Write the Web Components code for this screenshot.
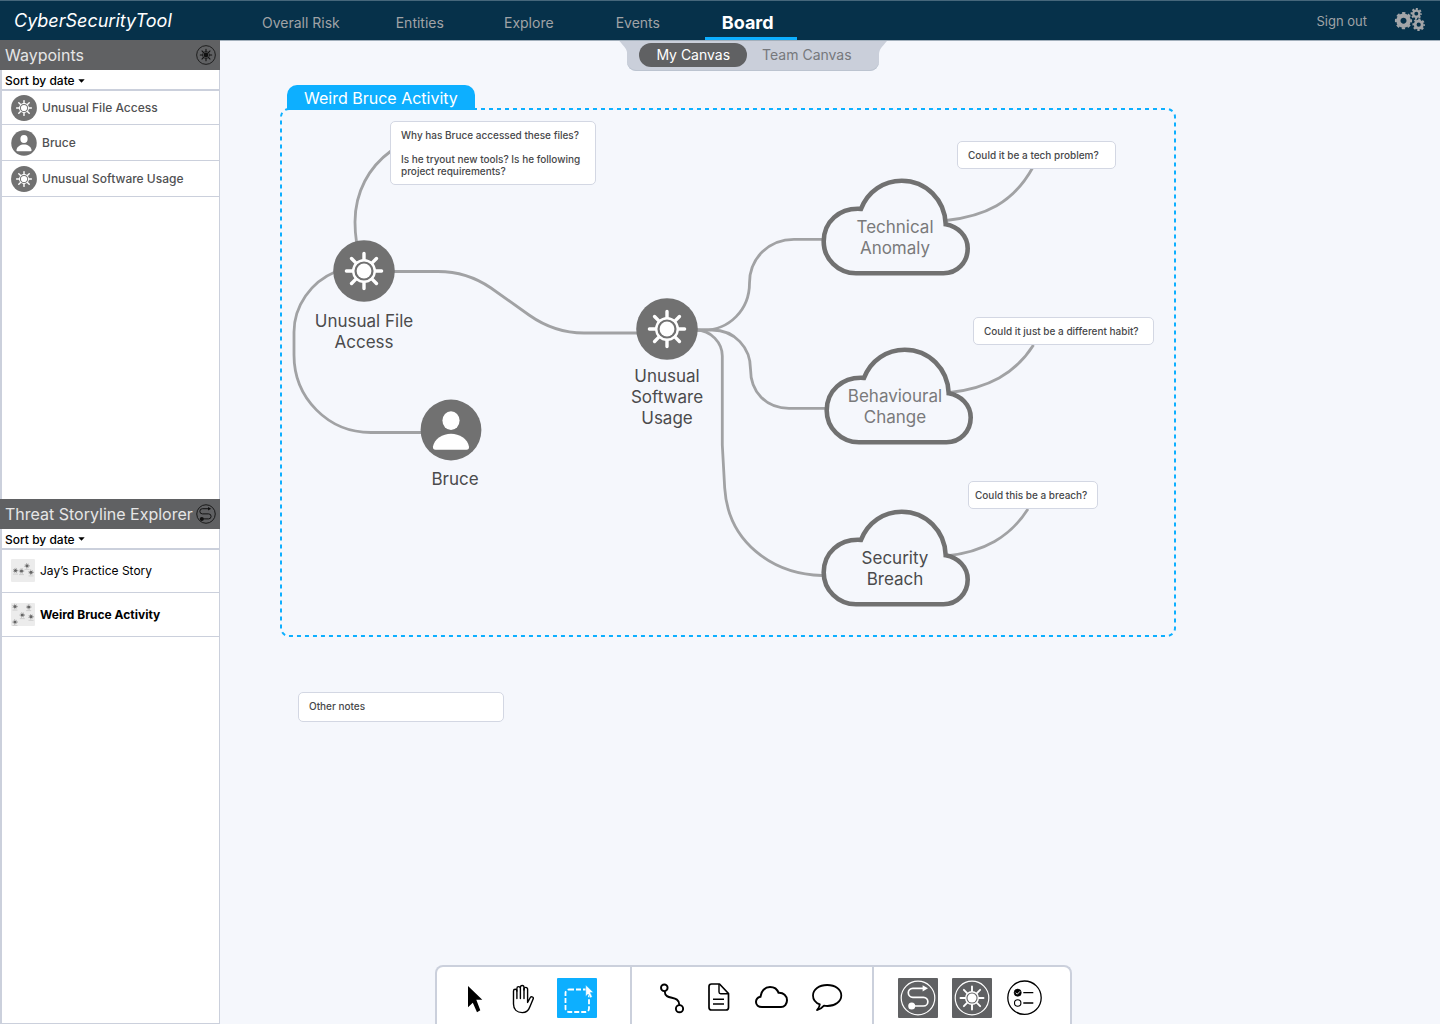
<!DOCTYPE html>
<html lang="en">
<head>
<meta charset="utf-8">
<title>CyberSecurityTool – Board</title>
<style>
  html, body { margin: 0; }
  body {
    font-family: Inter, "Liberation Sans", sans-serif;
    font-size: 14px;
    --line: #cbd0dc;
    --panel: #606163;
    --accent: #0dafff;
    --canvas: #f5f7fc;
  }
</style>
</head>
<body>
<cyber-app>
  <app-header slot="header"></app-header>
  <side-panel slot="side" heading="Waypoints" icon="sun-outline">
    <waypoint-item icon="sun">Unusual File Access</waypoint-item>
    <waypoint-item icon="person">Bruce</waypoint-item>
    <waypoint-item icon="sun">Unusual Software Usage</waypoint-item>
  </side-panel>
  <side-panel slot="side" heading="Threat Storyline Explorer" icon="route-outline">
    <story-item icon="thumb-a">Jay’s Practice Story</story-item>
    <story-item icon="thumb-b" current>Weird Bruce Activity</story-item>
  </side-panel>
  <canvas-tabs slot="tabs"></canvas-tabs>
  <story-board slot="board">
    <board-node icon="sun" style="left:113px;top:200px"></board-node>
    <board-label style="left:84px;top:271px">Unusual File<br>Access</board-label>
    <board-node icon="person" style="left:200px;top:359px"></board-node>
    <board-label style="left:175px;top:429px">Bruce</board-label>
    <board-node icon="sun" style="left:416px;top:258px"></board-node>
    <board-label style="left:387px;top:326px">Unusual<br>Software<br>Usage</board-label>
    <board-cloud style="left:600px;top:138px"></board-cloud>
    <board-label muted style="left:615px;top:177px">Technical<br>Anomaly</board-label>
    <board-cloud style="left:603px;top:307px"></board-cloud>
    <board-label muted style="left:615px;top:346px">Behavioural<br>Change</board-label>
    <board-cloud style="left:600px;top:469px"></board-cloud>
    <board-label style="left:615px;top:508px">Security<br>Breach</board-label>
    <board-note style="left:170px;top:81px;width:206px">Why has Bruce accessed these files?<br><br>Is he tryout new tools? Is he following project requirements?</board-note>
    <board-note style="left:737px;top:101px;width:159px">Could it be a tech problem?</board-note>
    <board-note style="left:753px;top:277px;width:181px">Could it just be a different habit?</board-note>
    <board-note snug style="left:748px;top:441px;width:130px">Could this be a breach?</board-note>
    <board-note style="left:78px;top:652px;width:206px;height:30px">Other notes</board-note>
  </story-board>
  <tool-bar slot="tools"></tool-bar>
</cyber-app>

<script>
const rays = (inner, outer) => [0, 45, 90, 135, 180, 225, 270, 315].map(a => {
  const c = Math.cos(a * Math.PI / 180), s = Math.sin(a * Math.PI / 180);
  return `M${(c * inner).toFixed(2)} ${(s * inner).toFixed(2)}L${(c * outer).toFixed(2)} ${(s * outer).toFixed(2)}`;
}).join('');

const sunShape = color => `
  <path d="${rays(11.5, 17.6)}" fill="none" stroke="${color}" stroke-width="3.4" stroke-linecap="round"/>
  <circle r="10.8" fill="none" stroke="${color}" stroke-width="2.4"/>
  <circle r="7.4" fill="${color}"/>`;

const routeShape = color => `
  <path d="M14 28H25.5a4.35 4.35 0 0 0 0-8.7H14.8a4.5 4.5 0 0 1 0-9H26" fill="none" stroke="${color}" stroke-width="1.7"/>
  <circle cx="13.7" cy="28" r="3.5" fill="${color}"/>
  <path d="M24.6 7.2L30 10.3l-5.4 3.2z" fill="${color}"/>`;

const gear = (x, y, r, hole, teeth) => {
  const body = r - 1.4, ring = r - 1, step = 2 * Math.PI * ring / teeth;
  return `<g transform="translate(${x} ${y})" fill="none" stroke="#a3a5a8">
    <circle r="${(body + hole) / 2}" stroke-width="${body - hole}"/>
    <circle r="${ring}" stroke-width="2" stroke-dasharray="${step * .55} ${step * .45}" stroke-dashoffset="${step * .275}"/></g>`;
};

const star = (x, y) => `<circle cx="${x}" cy="${y}" r="1.6" fill="#666"/><circle cx="${x}" cy="${y}" r="2.2" fill="none" stroke="#777" stroke-width=".8" stroke-dasharray=".7 1"/><path d="M${x - 2.5} ${y + 3.6}h5" stroke="#bbb" stroke-width=".6"/>`;

const ICONS = {
  'sun': ['-31 -31 62 62', `<circle r="30.8" fill="#717171"/>${sunShape('#fff')}`],
  'person': ['-31 -31 62 62', `<circle r="30.4" fill="#717171"/><ellipse cy="-9.4" rx="8.6" ry="9.4" fill="#fff"/><path d="M-18 16.5C-16.5 8.5-8.5 3.7 0 3.7S16.5 8.5 18 16.5Q18.3 19.7 15.5 19.7H-15.5Q-18.3 19.7-18 16.5Z" fill="#fff"/>`],
  'sun-outline': ['-31 -31 62 62', `<circle r="29" fill="none" stroke="#111" stroke-width="2.6"/>${sunShape('#111')}`],
  'route-outline': ['0 0 40 40', `<circle cx="20" cy="20" r="18.5" fill="none" stroke="#111" stroke-width="1.8"/><g transform="translate(20 20) scale(1.15) translate(-21 -19.5)">${routeShape('#111')}</g>`],
  'gears': ['1394 5 32 30', gear(1403.5, 19.7, 8.6, 3, 8) + gear(1416.3, 12.7, 5.7, 1.9, 8) + gear(1418.7, 23.7, 6.3, 2.1, 8)],
  'thumb-a': ['0 0 24 23', `<rect width="24" height="23" rx="1" fill="#ececec"/>${star(4.5, 11.5)}${star(10.5, 12)}${star(16, 6.8)}${star(20, 13.3)}`],
  'thumb-b': ['0 0 24 23', `<rect width="24" height="23" rx="1" fill="#ececec"/>${star(4, 3.5)}${star(17.7, 4)}${star(11.3, 12)}${star(20, 13.7)}${star(4, 19)}`],
  'cursor': ['0 0 24 40', `<path d="M5 8L19.3 21.8H13.3L17.3 32.3L14 34.2L9.8 24.8L5 29.3Z" fill="#000"/>`],
  'hand': ['0 0 24 40', `<g fill="none" stroke="#000" stroke-width="1.4" stroke-linecap="round" stroke-linejoin="round"><path d="M6.9 20.5V13a1.7 1.7 0 0 0-3.4 0V26C3.5 31.5 7 34.6 12.3 34.6C16 34.6 18.6 32.5 20 28.5L23 21.2A1.5 1.5 0 0 0 20.3 19.5L17.6 24.5V11.2a1.8 1.8 0 0 0-3.6 0V20.5"/><path d="M6.9 13V10.4a1.75 1.75 0 0 1 3.5 0V20.5M10.4 10.4V9.3a1.8 1.8 0 0 1 3.6 0V12"/></g>`],
  'select': ['0 0 40 40', `<rect x="8.5" y="11.5" width="23.5" height="22.5" rx="3.5" fill="none" stroke="#fff" stroke-width="1.8" stroke-dasharray="5 2"/><path d="M28.7 7L36.5 14.6H33.3L35.3 18.8L33.3 20L31.2 16L28.7 18.6Z" fill="#fff" stroke="#0dafff" stroke-width=".5"/>`],
  'link': ['0 0 24 40', `<g fill="none" stroke="#000" stroke-width="1.9"><circle cx="4.3" cy="9.8" r="3.3"/><circle cx="19.5" cy="30.7" r="3.6"/><path d="M4.7 13.2C5 23.5 19 16 19.4 27"/></g>`],
  'doc': ['0 0 24 40', `<g fill="none" stroke="#000" stroke-width="1.7" stroke-linejoin="round"><path d="M4.5 6H12.5L21.5 15.5V29.5Q21.5 32 19 32H4.5Q2 32 2 29.5V8.5Q2 6 4.5 6Z"/><path d="M12 6V14Q12 15.7 13.7 15.7H21.5M6 21.2H17M6 26H17" stroke-width="1.4"/></g>`],
  'cloud': ['0 0 34 40', `<path d="M8 29C4.5 29 2 27 2 24C2 21.3 4 19.3 6.5 18.7C7 13 11 9 16 9C20.5 9 23.3 11.3 24.5 14.8C29.5 14.5 33 17.7 33 22.3C33 26 30.5 29 27 29Z" fill="none" stroke="#000" stroke-width="2"/>`],
  'bubble': ['0 0 32 40', `<path d="M8.8 26.3C4.5 24.8 2 21.5 2 17.5C2 11.5 8 7 16.2 7S30.3 11.5 30.3 17.5S24 28 16.5 28Q14.5 28 13 27.6C11 30 9 31.3 6 32C7.8 30 8.8 28.5 8.8 26.3Z" fill="none" stroke="#000" stroke-width="1.8" stroke-linejoin="round"/>`],
  'route': ['0 0 40 40', `<circle cx="20" cy="20" r="16.8" fill="none" stroke="#fff" stroke-width="1.2"/>${routeShape('#fff')}`],
  'sun-tool': ['0 0 40 40', `<circle cx="20" cy="20" r="16.8" fill="none" stroke="#fff" stroke-width="1.2"/><g fill="none" stroke="#fff" transform="translate(20 20)"><path d="${rays(7, 11.5)}" stroke-width="1.9" stroke-linecap="round"/><circle r="6.3" stroke-width="1.4"/><circle r="4.5" fill="#fff" stroke="none"/></g>`],
  'list': ['0 0 37 40', `<g fill="none" stroke="#000"><circle cx="18.5" cy="19.7" r="16.7" stroke-width="1.3"/><circle cx="11.7" cy="14.7" r="3.6" fill="#000" stroke-width=".6"/><path d="M9.8 14.7L11.3 16.2L14 13.3" stroke="#fff" stroke-width=".9"/><circle cx="11.7" cy="25" r="3.2" stroke-width="1.1"/><path d="M17.3 14.7H27.3M17.3 25H27.3" stroke-width="1.3"/></g>`],
};

class CsIcon extends HTMLElement {
  connectedCallback() {
    const [box, body] = ICONS[this.getAttribute('name')];
    this.attachShadow({ mode: 'open' }).innerHTML = `
      <style>:host{display:block;flex:none} svg{display:block;width:100%;height:100%}</style>
      <svg viewBox="${box}" aria-hidden="true">${body}</svg>`;
  }
}

class CyberApp extends HTMLElement {
  connectedCallback() {
    this.attachShadow({ mode: 'open' }).innerHTML = `
      <style>
        :host { display: flex; flex-direction: column; min-height: 100vh; background: var(--canvas); }
        .body { flex: 1; display: flex; }
        aside {
          flex: none; width: 220px; box-sizing: border-box; background: #fff;
          display: grid; grid-template-rows: 459fr 525fr;
          border: solid var(--line); border-width: 0 1px 1px 2px;
        }
        main {
          flex: 1; min-width: 0; position: relative; box-sizing: border-box;
          display: flex; flex-direction: column; align-items: center;
          justify-content: space-between;
          border-top: 1px solid #a3b0bc; padding-right: 154px;
        }
      </style>
      <slot name="header"></slot>
      <div class="body">
        <aside><slot name="side"></slot></aside>
        <main><slot name="board"></slot><slot name="tabs"></slot><slot name="tools"></slot></main>
      </div>`;
  }
}

class AppHeader extends HTMLElement {
  connectedCallback() {
    this.attachShadow({ mode: 'open' }).innerHTML = `
      <style>
        :host { display: block; background: #06314a; border-top: 1px solid #46677b; }
        header { height: 39px; display: flex; align-items: center; padding: 0 14px; }
        .brand { width: 231px; font-size: 18px; font-style: italic; font-weight: 400; color: #fff; }
        nav { display: flex; flex: 1; gap: 17px; align-self: stretch; }
        a { color: #a0a3a6; text-decoration: none; }
        nav a {
          display: flex; align-items: center; justify-content: center; box-sizing: border-box;
          min-width: 92px; padding: 6px 17px 0; border-bottom: 3px solid transparent;
        }
        nav a.active {
          color: #fff; font-size: 18px; font-weight: 700; margin-left: 4px;
          justify-content: flex-start; border-color: var(--accent);
        }
        .out { margin-right: 27px; font-size: 13px; }
        button { all: unset; cursor: pointer; }
        cs-icon { width: 32px; height: 30px; }
      </style>
      <header>
        <div class="brand">CyberSecurityTool</div>
        <nav>
          <a href="#risk">Overall Risk</a><a href="#entities">Entities</a><a href="#explore">Explore</a>
          <a href="#events">Events</a><a href="#board" class="active" aria-current="page">Board</a>
        </nav>
        <a class="out" href="#signout">Sign out</a>
        <button type="button" aria-label="Settings"><cs-icon name="gears"></cs-icon></button>
      </header>`;
  }
}

class SidePanel extends HTMLElement {
  connectedCallback() {
    this.attachShadow({ mode: 'open' }).innerHTML = `
      <style>
        :host { display: block; }
        h2 {
          margin: 0 -1px 0 -2px; height: 30px; padding: 0 4px 0 5px; background: var(--panel);
          display: flex; align-items: center; justify-content: space-between;
          font-size: 16px; font-weight: 400; color: #e6e6e6; white-space: nowrap;
        }
        cs-icon { width: 20px; height: 20px; }
        .sort {
          display: flex; align-items: center; gap: 3px; height: 21px; padding: 2px 0 0 3px;
          box-sizing: border-box; border-bottom: 2px solid var(--line);
        }
        select {
          appearance: none; border: 0; padding: 0; margin: 0; background: none; color: #000;
          font: 500 12px/17px Inter, "Liberation Sans", sans-serif; field-sizing: content;
        }
        .sort svg { width: 7px; height: 4px; }
      </style>
      <h2>${this.getAttribute('heading')}<cs-icon name="${this.getAttribute('icon')}"></cs-icon></h2>
      <div class="sort">
        <select aria-label="Sort order"><option>Sort by date</option></select>
        <svg viewBox="0 0 7 4" aria-hidden="true"><path d="M.3.3H6.7L3.5 3.8Z"/></svg>
      </div>
      <slot></slot>`;
  }
}

class WaypointItem extends HTMLElement {
  connectedCallback() {
    this.attachShadow({ mode: 'open' }).innerHTML = `
      <style>
        :host { display: block; height: 36px; box-sizing: border-box; border-bottom: 1px solid var(--line); }
        :host(:first-child) { height: 34px; }
        a {
          height: 100%; display: flex; align-items: center; gap: 5px; padding-left: 9px;
          font-size: 12px; font-weight: 500; color: #505153; text-decoration: none;
        }
        cs-icon { width: 26px; height: 26px; }
      </style>
      <a href="#waypoint"><cs-icon name="${this.getAttribute('icon')}"></cs-icon><slot></slot></a>`;
  }
}

class StoryItem extends HTMLElement {
  connectedCallback() {
    this.attachShadow({ mode: 'open' }).innerHTML = `
      <style>
        :host { display: block; height: 44px; box-sizing: border-box; border-bottom: 1px solid var(--line); }
        :host(:first-child) { height: 43px; }
        a {
          height: 100%; display: flex; align-items: center; gap: 5px; padding-left: 9px;
          font-size: 12px; font-weight: 400; color: #000; text-decoration: none;
        }
        :host([current]) a { font-weight: 700; }
        cs-icon { width: 24px; height: 23px; }
      </style>
      <a href="#story"><cs-icon name="${this.getAttribute('icon')}"></cs-icon><slot></slot></a>`;
  }
}

class CanvasTabs extends HTMLElement {
  connectedCallback() {
    this.attachShadow({ mode: 'open' }).innerHTML = `
      <style>
        :host {
          position: relative; display: flex; box-sizing: border-box; height: 30px; padding: 2px 12px 4px;
          background: #cacfda; border-radius: 0 0 9px 9px; box-shadow: inset 0 -1px 0 #bcc4d0;
        }
        :host::before, :host::after {
          content: ""; position: absolute; top: 0; left: -8px; width: 9px; height: 14px;
          background: #cacfda; clip-path: path("M0 0H9V14H8C8 8 5 6 0 0Z");
        }
        :host::after { left: auto; right: -8px; transform: scaleX(-1); }
        button {
          border: 0; background: none; padding: 0 15px; border-radius: 12px; cursor: pointer;
          font: 400 14px/24px Inter, "Liberation Sans", sans-serif; color: #76787c;
        }
        button[aria-pressed="true"] { background: var(--panel); color: #fff; padding: 0 17px; }
      </style>
      <button type="button" aria-pressed="true">My Canvas</button>
      <button type="button" aria-pressed="false">Team Canvas</button>`;
  }
}

class StoryBoard extends HTMLElement {
  connectedCallback() {
    this.attachShadow({ mode: 'open' }).innerHTML = `
      <style>
        :host { position: absolute; inset: -1px 0 0 0; overflow: hidden; pointer-events: none; }
        svg { position: absolute; left: 0; top: 0; }
        h1 {
          position: absolute; left: 67px; top: 45px; margin: 0; box-sizing: border-box;
          height: 25px; padding: 0 17px; border-radius: 10px 10px 0 0; background: var(--accent);
          color: #fff; font-size: 16px; font-weight: 400; line-height: 26px; white-space: nowrap;
        }
      </style>
      <svg width="1220" height="620" viewBox="220 40 1220 620" fill="none" aria-hidden="true">
        <rect x="281" y="109" width="894" height="527" rx="8" stroke="#0dafff" stroke-width="2" stroke-dasharray="4 4"/>
        <g stroke="#a1a2a4" stroke-width="2.8">
          <path d="M391 151C369 167 355 192 355 222Q355 232 356.5 242"/>
          <path d="M335 272C311 282 294 306 294 332V355C294 398 328 432.5 371 432.5H422"/>
          <path d="M394 271.5H438C458 271.5 475 277 491 288L529 315C546 327 564 333 584 333H637"/>
          <path d="M696 330H704C729 330 749.5 310 749.5 283C749.5 258 769 239.3 794 239.3H822"/>
          <path d="M696 330H712C735 330 750.5 348 750.5 369C750.5 392 766 408.3 789 408.3H826"/>
          <path d="M696 330C711 330 722.3 343 722.3 356V445L724.7 488C728 542 772 574 822 575.5"/>
          <path d="M946 220.5C985 216 1013 203 1032.5 168"/>
          <path d="M950 392.5C988 388 1015 374 1033.5 345"/>
          <path d="M946 556C984 552 1010 537 1028 509"/>
        </g>
      </svg>
      <h1>Weird Bruce Activity</h1>
      <slot></slot>`;
  }
}

class BoardNode extends HTMLElement {
  connectedCallback() {
    this.attachShadow({ mode: 'open' }).innerHTML = `
      <style>
        :host { position: absolute; display: block; }
        cs-icon { width: 62px; height: 62px; }
      </style>
      <cs-icon name="${this.getAttribute('icon')}"></cs-icon>`;
  }
}

class BoardLabel extends HTMLElement {
  connectedCallback() {
    this.attachShadow({ mode: 'open' }).innerHTML = `
      <style>
        :host {
          position: absolute; display: block; width: 120px;
          font-size: 17px; line-height: 21px; text-align: center; color: #4b4b4c;
        }
        :host([muted]) { color: #7a7a7b; }
      </style>
      <slot></slot>`;
  }
}

class BoardCloud extends HTMLElement {
  connectedCallback() {
    this.attachShadow({ mode: 'open' }).innerHTML = `
      <style>
        :host { position: absolute; display: block; }
        svg { display: block; }
      </style>
      <svg viewBox="820 178 150 98" width="150" height="98" aria-hidden="true">
        <path d="M856 273.3C838 273.3 823.7 259 823.7 241.5C823.7 222 839 207.5 861 208.9C868 191 884 180.7 901.7 180.7C926 180.7 945 200 945.7 224.3C958 226.5 967.7 236 967.7 248.5C967.7 262.5 957 273.3 943.5 273.3Z" fill="#f5f7fc" stroke="#717171" stroke-width="4.6"/>
      </svg>`;
  }
}

class BoardNote extends HTMLElement {
  connectedCallback() {
    this.attachShadow({ mode: 'open' }).innerHTML = `
      <style>
        :host {
          position: absolute; box-sizing: border-box; padding: 7px 10px; background: #fff;
          border: 1px solid #d3d7e3; border-radius: 5px;
          font-size: 10px; font-weight: 500; line-height: 12px; color: #47484a;
        }
        :host([snug]) { padding: 7px 6px; }
      </style>
      <slot></slot>`;
  }
}

class ToolBar extends HTMLElement {
  connectedCallback() {
    const tool = (name, label, width, cls = '') =>
      `<button type="button" aria-label="${label}" class="${cls}"><cs-icon name="${name}" style="width:${width}px;height:40px"></cs-icon></button>`;
    this.attachShadow({ mode: 'open' }).innerHTML = `
      <style>
        :host {
          position: relative; display: flex; background: #fff;
          border: 2px solid var(--line); border-bottom: 0; border-radius: 8px 8px 0 0;
        }
        div { display: flex; gap: 23px; padding: 11px 29px 6px 28px; }
        .pointer { padding-left: 26px; padding-right: 33px; }
        .panels { gap: 14px; padding-left: 24px; padding-right: 27px; }
        div + div { border-left: 2px solid var(--line); }
        button { border: 0; padding: 0; background: none; border-radius: 1px; cursor: pointer; }
        .picked { background: var(--accent); }
        .dark { background: var(--panel); }
      </style>
      <div class="pointer" role="group" aria-label="Pointer">
        ${tool('cursor', 'Move', 24)}${tool('hand', 'Pan', 24)}${tool('select', 'Select area', 40, 'picked')}
      </div>
      <div role="group" aria-label="Insert">
        ${tool('link', 'Connector', 24)}${tool('doc', 'Note', 24)}${tool('cloud', 'Hypothesis', 34)}${tool('bubble', 'Comment', 32)}
      </div>
      <div class="panels" role="group" aria-label="Panels">
        ${tool('route', 'Storylines', 40, 'dark')}${tool('sun-tool', 'Waypoints', 40, 'dark')}${tool('list', 'Tasks', 37)}
      </div>`;
  }
}

customElements.define('cs-icon', CsIcon);
customElements.define('cyber-app', CyberApp);
customElements.define('app-header', AppHeader);
customElements.define('side-panel', SidePanel);
customElements.define('waypoint-item', WaypointItem);
customElements.define('story-item', StoryItem);
customElements.define('canvas-tabs', CanvasTabs);
customElements.define('story-board', StoryBoard);
customElements.define('board-node', BoardNode);
customElements.define('board-label', BoardLabel);
customElements.define('board-cloud', BoardCloud);
customElements.define('board-note', BoardNote);
customElements.define('tool-bar', ToolBar);
</script>
</body>
</html>
